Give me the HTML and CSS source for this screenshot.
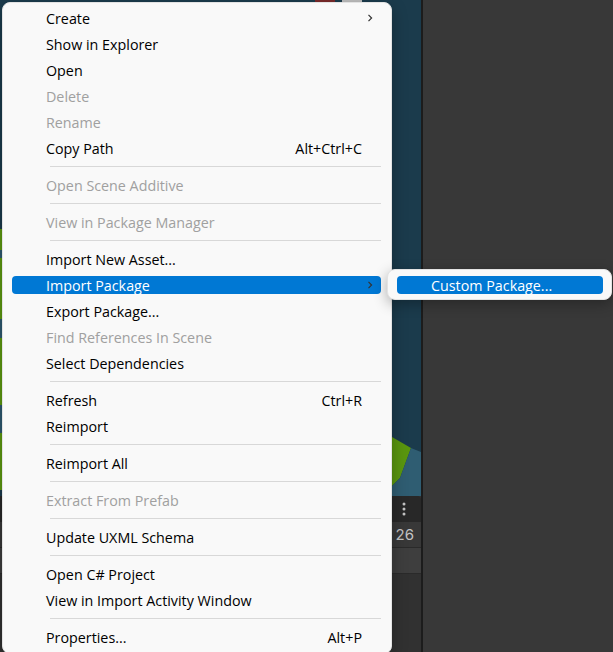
FILE: index.html
```html
<!DOCTYPE html>
<html>
<head>
<meta charset="utf-8">
<link rel="stylesheet" href="styles.css">
</head>
<body>
<div class="app">
  <div class="scene-col">
    <div class="scene">
      <svg class="scene-art" viewBox="0 0 421 496" preserveAspectRatio="none">
        <rect x="0" y="0" width="421" height="496" fill="#1b3b4c"/>
        <rect x="315" y="0" width="20" height="2" fill="#7a2b2b"/>
        <rect x="342" y="0" width="20" height="2" fill="#bdbdbd"/>
        <rect x="0" y="229" width="4" height="21" fill="#5d9a10"/>
        <rect x="0" y="250" width="4" height="8" fill="#2e5a70"/>
        <rect x="0" y="258" width="4" height="61" fill="#5d9a10"/>
        <rect x="0" y="319" width="4" height="19" fill="#2e5a70"/>
        <rect x="0" y="338" width="4" height="67" fill="#5d9a10"/>
        <rect x="0" y="405" width="4" height="28" fill="#2e5a70"/>
        <rect x="0" y="433" width="4" height="57" fill="#5d9a10"/>
        <polygon points="392,437 411,448 400,478 392,486" fill="#5a960f"/>
        <polygon points="411,448 421,452 421,496 392,496 392,486 400,478" fill="#2f5d72"/>
      </svg>
    </div>
    <div class="toolbar">
      <svg class="kebab" viewBox="0 0 4 14" width="4" height="14">
        <circle cx="2" cy="2" r="1.5" fill="#c4c4c4"/>
        <circle cx="2" cy="7" r="1.5" fill="#c4c4c4"/>
        <circle cx="2" cy="12" r="1.5" fill="#c4c4c4"/>
      </svg>
    </div>
    <div class="row row-count"><span class="count">26</span></div>
    <div class="row row-empty"></div>
    <div class="rest"></div>
  </div>
  <div class="divider"></div>
  <div class="inspector"></div>
</div>

<div class="menu">
  <div class="item"><div class="inner"><span class="label">Create</span><svg class="arrow" viewBox="0 0 6 8" width="6" height="8"><path d="M1.5 0.8 L4.6 4 L1.5 7.2" fill="none" stroke="#333" stroke-width="1.2"/></svg></div></div>
  <div class="item"><div class="inner"><span class="label">Show in Explorer</span></div></div>
  <div class="item"><div class="inner"><span class="label">Open</span></div></div>
  <div class="item disabled"><div class="inner"><span class="label">Delete</span></div></div>
  <div class="item disabled"><div class="inner"><span class="label">Rename</span></div></div>
  <div class="item"><div class="inner"><span class="label">Copy Path</span><span class="shortcut">Alt+Ctrl+C</span></div></div>
  <div class="sep"></div>
  <div class="item disabled"><div class="inner"><span class="label">Open Scene Additive</span></div></div>
  <div class="sep"></div>
  <div class="item disabled"><div class="inner"><span class="label">View in Package Manager</span></div></div>
  <div class="sep"></div>
  <div class="item"><div class="inner"><span class="label">Import New Asset...</span></div></div>
  <div class="item active"><div class="inner"><span class="label">Import Package</span><svg class="arrow" viewBox="0 0 6 8" width="6" height="8"><path d="M1.5 0.8 L4.6 4 L1.5 7.2" fill="none" stroke="#333" stroke-width="1.2"/></svg></div></div>
  <div class="item"><div class="inner"><span class="label">Export Package...</span></div></div>
  <div class="item disabled"><div class="inner"><span class="label">Find References In Scene</span></div></div>
  <div class="item"><div class="inner"><span class="label">Select Dependencies</span></div></div>
  <div class="sep"></div>
  <div class="item"><div class="inner"><span class="label">Refresh</span><span class="shortcut">Ctrl+R</span></div></div>
  <div class="item"><div class="inner"><span class="label">Reimport</span></div></div>
  <div class="sep"></div>
  <div class="item"><div class="inner"><span class="label">Reimport All</span></div></div>
  <div class="sep"></div>
  <div class="item disabled"><div class="inner"><span class="label">Extract From Prefab</span></div></div>
  <div class="sep"></div>
  <div class="item"><div class="inner"><span class="label">Update UXML Schema</span></div></div>
  <div class="sep"></div>
  <div class="item"><div class="inner"><span class="label">Open C# Project</span></div></div>
  <div class="item"><div class="inner"><span class="label">View in Import Activity Window</span></div></div>
  <div class="sep"></div>
  <div class="item"><div class="inner"><span class="label">Properties...</span><span class="shortcut">Alt+P</span></div></div>
</div>

<div class="submenu">
  <div class="sub-inner">Custom Package...</div>
</div>
</body>
</html>
```

FILE: styles.css
```css
html, body {
  margin: 0;
  padding: 0;
  width: 613px;
  height: 652px;
  overflow: hidden;
  background: #383838;
  font-family: "Open Sans", "Noto Sans", sans-serif;
}

.app {
  display: flex;
  width: 613px;
  height: 652px;
}

.scene-col {
  width: 421px;
  display: flex;
  flex-direction: column;
  background: #313131;
}

.scene {
  height: 496px;
  flex: none;
}

.scene-art {
  display: block;
  width: 421px;
  height: 496px;
}

.toolbar {
  height: 26px;
  flex: none;
  background: #282828;
  border-top-right-radius: 4px;
  display: flex;
  align-items: center;
  justify-content: flex-end;
  padding-right: 15px;
  box-sizing: border-box;
}

.kebab {
  display: block;
}

.row {
  height: 26px;
  flex: none;
  box-sizing: border-box;
  border-bottom: 1px solid #2a2a2a;
  display: flex;
  align-items: center;
  justify-content: flex-end;
  padding-right: 7px;
}

.row-count {
  background: #383838;
}

.row-empty {
  background: #3e3e3e;
}

.count {
  color: #c4c4c4;
  font-size: 15px;
  font-family: "Inter", "Noto Sans", sans-serif;
}

.rest {
  flex: 1;
  background: #313131;
}

.divider {
  width: 2px;
  background: #1c1c1c;
}

.inspector {
  flex: 1;
  background: #383838;
}

/* Context menu */
.menu {
  position: absolute;
  left: 2px;
  top: 2px;
  width: 390px;
  height: 652px;
  box-sizing: border-box;
  background: #f9f9f9;
  border: 1px solid #e3e3e3;
  border-radius: 8px;
  padding-top: 2px;
  box-shadow: 0 6px 16px rgba(0, 0, 0, 0.3);
}

.item {
  height: 26px;
  box-sizing: border-box;
  padding: 4px 10px 4px 9px;
}

.inner {
  height: 18px;
  display: flex;
  align-items: center;
  padding: 0 8px 0 34px;
  border-radius: 4px;
  font-size: 14.3px;
  color: #000000;
}

.label {
  flex: 1;
  white-space: nowrap;
}

.shortcut {
  margin-right: 11px;
  white-space: nowrap;
}

.arrow {
  display: block;
  flex: none;
}

.disabled .inner {
  color: #a0a0a0;
}

.active .inner {
  background: #0078d4;
  color: #ffffff;
}

.sep {
  height: 11px;
  display: flex;
  align-items: center;
  padding: 0 10px 0 47px;
}

.sep::before {
  content: "";
  flex: 1;
  height: 1px;
  background: #d8d8d8;
}

/* Submenu */
.submenu {
  position: absolute;
  left: 387px;
  top: 269px;
  width: 225px;
  height: 31px;
  box-sizing: border-box;
  background: #f9f9f9;
  border: 1px solid #e3e3e3;
  border-radius: 8px;
  padding: 6px 8px 5px 9px;
  box-shadow: 0 4px 14px rgba(0, 0, 0, 0.3);
}

.sub-inner {
  height: 18px;
  display: flex;
  align-items: center;
  padding-left: 34px;
  border-radius: 4px;
  background: #0078d4;
  color: #ffffff;
  font-size: 14.3px;
  white-space: nowrap;
}
```
